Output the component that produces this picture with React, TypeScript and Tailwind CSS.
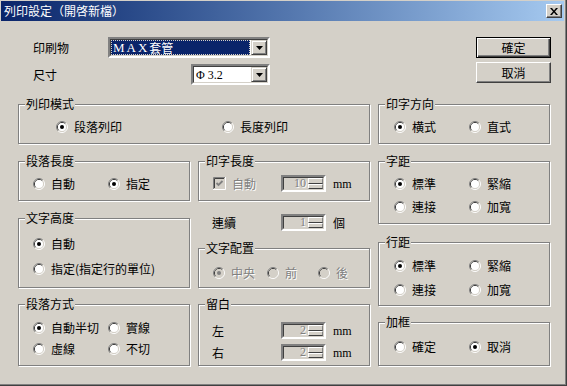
import { ReactNode } from 'react';

const dis = 'text-[#808080] [text-shadow:1px_1px_0_#fff]';

function Radio({ checked = false, disabled = false }: { checked?: boolean; disabled?: boolean }) {
  return (
    <svg width="12" height="12" viewBox="0 0 12 12" className="shrink-0">
      <path d="M2.11 9.89A5.5 5.5 0 0 1 9.89 2.11" fill="none" stroke="#808080" />
      <path d="M9.89 2.11A5.5 5.5 0 0 1 2.11 9.89" fill="none" stroke="#ffffff" />
      <path d="M2.82 9.18A4.5 4.5 0 0 1 9.18 2.82" fill="none" stroke="#404040" />
      <path d="M9.18 2.82A4.5 4.5 0 0 1 2.82 9.18" fill="none" stroke="#d4d0c8" />
      <circle cx="6" cy="6" r="4" fill={disabled ? '#d4d0c8' : '#ffffff'} />
      {checked && <circle cx="6" cy="6" r="2" fill={disabled ? '#808080' : '#000000'} />}
    </svg>
  );
}

function Option({ label, checked, disabled, className = '' }: { label: string; checked?: boolean; disabled?: boolean; className?: string }) {
  return (
    <div className={`flex h-4 items-center ${className}`}>
      <Radio checked={checked} disabled={disabled} />
      <span className={`ml-[6px] whitespace-nowrap leading-4 ${disabled ? dis : ''}`}>{label}</span>
    </div>
  );
}

function Group({ title, className = '', children }: { title: string; className?: string; children?: ReactNode }) {
  return (
    <div className={`relative border border-[#808080] shadow-[1px_1px_0_#fff,inset_1px_1px_0_#fff] ${className}`}>
      <span className="absolute left-[6px] top-[-8px] bg-[#d4d0c8] px-[1px] leading-[14px] whitespace-nowrap">{title}</span>
      {children}
    </div>
  );
}

function Spin({ value }: { value: string }) {
  return (
    <div className="h-[17px] w-[45px] shrink-0 border-2 border-t-[#808080] border-l-[#808080] border-b-white border-r-white">
      <div className="flex h-full border border-t-[#404040] border-l-[#404040] border-b-[#d4d0c8] border-r-[#d4d0c8] bg-[#d4d0c8]">
        <span className={`flex-1 pr-[2px] text-right font-['Liberation_Serif',serif] text-[12px] leading-[11px] ${dis}`}>{value}</span>
        <div className="flex w-[15px] flex-col">
          <div className="h-[6px] border border-t-white border-l-white border-b-[#404040] border-r-[#808080]" />
          <div className="h-[5px] border border-t-white border-l-white border-b-[#404040] border-r-[#808080]" />
        </div>
      </div>
    </div>
  );
}

function DropBtn() {
  return (
    <div className="flex w-[16px] shrink-0 items-center justify-center border border-t-[#d4d0c8] border-l-[#d4d0c8] border-b-[#404040] border-r-[#404040] bg-[#d4d0c8] shadow-[inset_1px_1px_0_#fff,inset_-1px_-1px_0_#808080]">
      <svg width="7" height="4" viewBox="0 0 7 4"><path d="M0 0h7L3.5 4z" fill="#000" /></svg>
    </div>
  );
}

function Combo({ className = '', children }: { className?: string; children: ReactNode }) {
  return (
    <div className={`h-[21px] border-2 border-t-[#808080] border-l-[#808080] border-b-white border-r-white ${className}`}>
      <div className="flex h-full border border-t-[#404040] border-l-[#404040] border-b-[#d4d0c8] border-r-[#d4d0c8] bg-white">
        <div className="flex flex-1 items-center pr-[1px]">{children}</div>
        <DropBtn />
      </div>
    </div>
  );
}

export default function App() {
  return (
    <div className="h-[386px] w-[567px] overflow-hidden border-r border-b border-[#404040] bg-[#d4d0c8] pt-[1px] pl-[1px] pr-[2px] text-[12px] text-black shadow-[inset_-1px_-1px_0_#808080] font-['Noto_Sans_CJK_TC','Noto_Sans_CJK_JP',sans-serif]">
      {/* title bar */}
      <div className="flex h-[20px] items-center justify-between bg-linear-to-r from-[#0a246a] to-[#a6caf0] pl-[3px] pr-[2px]">
        <span className="text-[12px] leading-[14px] text-white">列印設定（開啓新檔）</span>
        <div className="flex h-[14px] w-[16px] items-center justify-center border border-t-white border-l-white border-b-[#404040] border-r-[#404040] bg-[#d4d0c8] shadow-[inset_-1px_-1px_0_#808080]">
          <svg width="8" height="7" viewBox="0 0 8 7"><path d="M0 0h2l2 2.5L6 0h2L5 3.5 8 7H6L4 4.5 2 7H0l3-3.5z" fill="#000" /></svg>
        </div>
      </div>

      <div className="pl-[17px]">
        {/* top section */}
        <div className="flex h-[83px] pt-[16px]">
          <div className="flex w-[458px] flex-col gap-[6px]">
            <div className="flex h-[21px] items-center pl-[15px]">
              <span className="w-[75px]">印刷物</span>
              <Combo className="w-[162px]">
                <div className="flex h-full flex-1 items-center bg-[#0a246a] pl-[2px] text-white outline outline-1 outline-dotted outline-[#d4d0c8] -outline-offset-1">
                  <span className="font-['Liberation_Serif',serif] text-[13px] tracking-[2px]">MAX</span>
                  <span>套管</span>
                </div>
              </Combo>
            </div>
            <div className="flex h-[21px] items-center pl-[15px]">
              <span className="w-[158px]">尺寸</span>
              <Combo className="w-[79px]">
                <span className="pl-[2px] font-['Liberation_Serif',serif] text-[12px]">Φ 3.2</span>
              </Combo>
            </div>
          </div>
          <div className="flex flex-col gap-[4px]">
            <button className="h-[21px] w-[75px] border border-black leading-[17px] shadow-[inset_1px_1px_0_#fff,inset_-1px_-1px_0_#404040,inset_-2px_-2px_0_#808080]">確定</button>
            <button className="h-[21px] w-[75px] border border-t-white border-l-white border-b-[#404040] border-r-[#404040] leading-[17px] shadow-[inset_-1px_-1px_0_#808080]">取消</button>
          </div>
        </div>

        {/* row A */}
        <div className="flex gap-[8px]">
          <Group title="列印模式" className="h-[40px] w-[352px] pt-[14px] pl-[37px]">
            <div className="flex">
              <Option label="段落列印" checked className="w-[166px]" />
              <Option label="長度列印" />
            </div>
          </Group>
          <Group title="印字方向" className="h-[40px] w-[172px] pt-[14px] pl-[15px]">
            <div className="flex">
              <Option label="横式" checked className="w-[75px]" />
              <Option label="直式" />
            </div>
          </Group>
        </div>

        {/* row B */}
        <div className="mt-[17px] flex gap-[8px]">
          <div className="flex w-[172px] flex-col">
            <Group title="段落長度" className="h-[40px] pt-[14px] pl-[14px]">
              <div className="flex">
                <Option label="自動" className="w-[75px]" />
                <Option label="指定" checked />
              </div>
            </Group>
            <Group title="文字高度" className="mt-[17px] h-[70px] pt-[17px] pl-[14px]">
              <div className="flex flex-col gap-[9px]">
                <Option label="自動" checked />
                <Option label="指定(指定行的單位)" />
              </div>
            </Group>
            <Group title="段落方式" className="mt-[16px] h-[62px] pt-[15px] pl-[14px]">
              <div className="flex flex-col gap-[5px]">
                <div className="flex">
                  <Option label="自動半切" checked className="w-[75px]" />
                  <Option label="實線" />
                </div>
                <div className="flex">
                  <Option label="虛線" className="w-[75px]" />
                  <Option label="不切" />
                </div>
              </div>
            </Group>
          </div>

          <div className="flex w-[172px] flex-col">
            <Group title="印字長度" className="h-[40px] pt-[13px] pl-[14px]">
              <div className="flex h-[17px] items-center">
                <div className="flex w-[68px] items-center">
                  <svg width="13" height="13" viewBox="0 0 13 13" className="shrink-0">
                    <path d="M0.5 12V0.5H12" stroke="#808080" fill="none" />
                    <path d="M1.5 11V1.5H11" stroke="#404040" fill="none" />
                    <path d="M0 12.5H12.5V0" stroke="#fff" fill="none" />
                    <path d="M1 11.5H11.5V1" stroke="#d4d0c8" fill="none" />
                    <rect x="2" y="2" width="9" height="9" fill="#d4d0c8" />
                    <polyline points="3.5,6 5.5,8 9.5,4" stroke="#808080" strokeWidth="1.8" fill="none" />
                  </svg>
                  <span className={`ml-[6px] ${dis}`}>自動</span>
                </div>
                <Spin value="10" />
                <span className="ml-[7px] font-['Liberation_Serif',serif] text-[12px]">mm</span>
              </div>
            </Group>
            <div className="mt-[13px] flex h-[17px] items-center pl-[14px]">
              <span className="w-[69px]">連續</span>
              <Spin value="1" />
              <span className="ml-[7px]">個</span>
            </div>
            <Group title="文字配置" className="mt-[17px] h-[40px] pt-[16px] pl-[14px]">
              <div className="flex">
                <Option label="中央" checked disabled className="w-[54px]" />
                <Option label="前" disabled className="w-[51px]" />
                <Option label="後" disabled />
              </div>
            </Group>
            <Group title="留白" className="mt-[16px] h-[62px] pt-[17px] pl-[13px]">
              <div className="flex flex-col gap-[5px]">
                <div className="flex h-[17px] items-center">
                  <span className="w-[69px]">左</span>
                  <Spin value="2" />
                  <span className="ml-[7px] font-['Liberation_Serif',serif] text-[12px]">mm</span>
                </div>
                <div className="flex h-[17px] items-center">
                  <span className="w-[69px]">右</span>
                  <Spin value="2" />
                  <span className="ml-[7px] font-['Liberation_Serif',serif] text-[12px]">mm</span>
                </div>
              </div>
            </Group>
          </div>

          <div className="flex w-[172px] flex-col">
            <Group title="字距" className="h-[63px] pt-[14px] pl-[15px]">
              <div className="flex flex-col gap-[7px]">
                <div className="flex">
                  <Option label="標準" checked className="w-[75px]" />
                  <Option label="緊縮" />
                </div>
                <div className="flex">
                  <Option label="連接" className="w-[75px]" />
                  <Option label="加寬" />
                </div>
              </div>
            </Group>
            <Group title="行距" className="mt-[18px] h-[64px] pt-[15px] pl-[15px]">
              <div className="flex flex-col gap-[8px]">
                <div className="flex">
                  <Option label="標準" checked className="w-[75px]" />
                  <Option label="緊縮" />
                </div>
                <div className="flex">
                  <Option label="連接" className="w-[75px]" />
                  <Option label="加寬" />
                </div>
              </div>
            </Group>
            <Group title="加框" className="mt-[16px] h-[44px] pt-[16px] pl-[15px]">
              <div className="flex">
                <Option label="確定" className="w-[75px]" />
                <Option label="取消" checked />
              </div>
            </Group>
          </div>
        </div>
      </div>
    </div>
  );
}
